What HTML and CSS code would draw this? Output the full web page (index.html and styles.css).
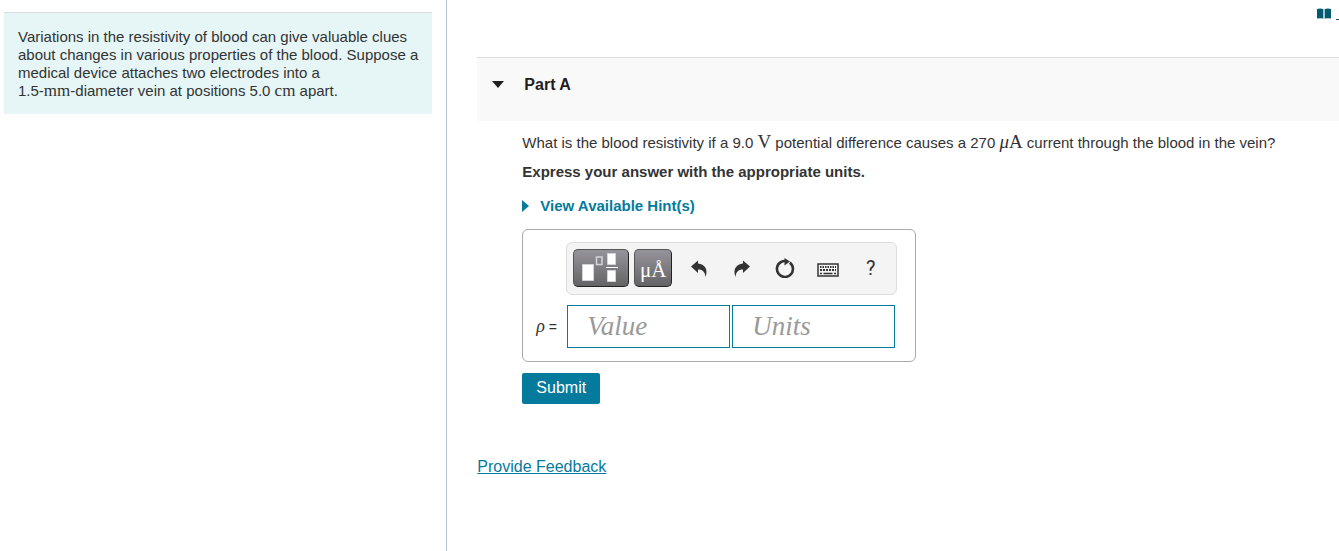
FILE: index.html
```html
<!DOCTYPE html>
<html lang="en">
<head>
<meta charset="utf-8">
<meta name="viewport" content="width=device-width, initial-scale=1">
<title>Part A</title>
<link rel="stylesheet" href="styles.css">
</head>
<body>
<div class="layout">
  <aside class="intro-pane">
    <p class="intro-card">Variations in the resistivity of blood can give valuable clues about changes in various properties of the blood. Suppose a medical device attaches two electrodes into a <span class="nowrap">1.5-<span class="unit">mm</span>-diameter</span> vein at positions 5.0 <span class="unit">cm</span> apart.</p>
  </aside>
  <main class="work-pane">
    <div class="topbar">
      <a class="resource-link" href="#" aria-label="Review">
        <svg class="book-icon" viewBox="0 0 14 12" aria-hidden="true"><path d="M0 1Q3 0 6.300 1V10.500Q3 10 0 10.500ZM7.700 1Q11 0 14 1V10.500Q11 10 7.700 10.500Z" fill="#005a70"/><path d="M6.300 1H7.700V10.500H6.300Z" fill="#9fc3cc"/></svg>
      </a>
    </div>
    <header class="part-header">
      <button class="toggle" type="button" aria-label="Collapse Part A"><svg class="caret" viewBox="0 0 12 7" aria-hidden="true"><path d="M0 0H12L6 7Z" fill="#231f20"/></svg></button>
      <h2 class="part-title">Part A</h2>
    </header>
    <section class="part-body">
      <p class="question">What is the blood resistivity if a 9.0 <span class="math">V</span> potential difference causes a 270 <span class="math"><i>μ</i>A</span> current through the blood in the vein?</p>
      <p class="instruction">Express your answer with the appropriate units.</p>
      <button class="hints" type="button"><svg class="hint-arrow" viewBox="0 0 7 12" aria-hidden="true"><path d="M0 0L7 6L0 12Z" fill="#047a9c"/></svg>View Available Hint(s)</button>
      <form class="answer-form">
        <div class="answer-box">
          <div class="toolbar" role="toolbar" aria-label="Equation tools">
            <button class="palette palette-wide" type="button" aria-label="Templates">
              <svg class="template-icon" viewBox="0 0 36 30" aria-hidden="true"><g fill="#fff" stroke="#d4d4d8"><path d="M.5 12.500H11.500V28.500H.5Z"/><path d="M25.500 1.500H33.500V12.500H25.500ZM25.500 18.500H33.500V29.500H25.500Z"/></g><path d="M14.500 5H20V12.500H14.500Z" fill="none" stroke="#d4d4d8" stroke-width="1.500"/><path d="M24 15.500H36" stroke="#fff"/></svg>
            </button>
            <button class="palette palette-units" type="button" aria-label="Units">μÅ</button>
            <div class="tools">
              <button class="tool" type="button" aria-label="Undo"><svg class="tool-icon" viewBox="0 0 20 20"><path d="M2 8.500L9 2.500V5.500C15.500 6 19.500 11 16.500 19C16 14 14 11.500 9 11.500V15Z" fill="#333"/></svg></button>
              <button class="tool" type="button" aria-label="Redo"><svg class="tool-icon" viewBox="0 0 20 20"><path d="M18 8.500L11 2.500V5.500C4.500 6 .5 11 3.500 19C4 14 6 11.500 11 11.500V15Z" fill="#333"/></svg></button>
              <button class="tool" type="button" aria-label="Reset"><svg class="tool-icon" viewBox="0 0 20 20"><path d="M14.800 4.600A8 8 0 1 1 6 4Q8 2.800 10.500 3" fill="none" stroke="#333" stroke-width="2.600"/><path d="M9.500 0L15 3.500L9.500 7.500Z" fill="#333"/></svg></button>
              <button class="tool" type="button" aria-label="Keyboard"><svg class="keyboard-icon" viewBox="0 0 22 14"><path d="M1 1H21V13H1Z" fill="none" stroke="#333" stroke-width="1.500"/><path d="M3 4H19" stroke="#333" stroke-width="2" stroke-dasharray="1.500 1"/><path d="M3 7H19" stroke="#333" stroke-width="2" stroke-dasharray="2 1"/><path d="M3 10.500H5M6.500 10.500H15.500M17 10.500H19" stroke="#333" stroke-width="1.500"/></svg></button>
              <button class="tool" type="button" aria-label="Help">?</button>
            </div>
          </div>
          <div class="answer-row">
            <span class="symbol"><i class="rho">ρ</i> =</span>
            <input class="field" type="text" aria-label="Value" placeholder="Value">
            <input class="field" type="text" aria-label="Units" placeholder="Units">
          </div>
        </div>
        <button class="submit" type="button">Submit</button>
      </form>
    </section>
    <a class="feedback" href="#">Provide Feedback</a>
  </main>
</div>
</body>
</html>
```
FILE: styles.css
```css
* { box-sizing: border-box; }
body {
  margin: 0;
  background: #fff;
  color: #333;
  font: 15px/18px "Liberation Sans", Arial, sans-serif;
}
p, h2 { margin: 0; }
button {
  margin: 0;
  padding: 0;
  border: 0;
  background: none;
  color: inherit;
  font: inherit;
  cursor: pointer;
}
svg { display: block; }

.layout {
  display: grid;
  grid-template-columns: minmax(0, 1fr) minmax(0, 2fr);
  min-height: 100vh;
}
.intro-pane { padding: 12px 14px 12px 4px; }
.intro-card {
  padding: 15px 12px 14px 14px;
  border-top: 1px solid #d9dfdf;
  background: #e6f6f7;
}
.nowrap { white-space: nowrap; }
.unit, .math { font-family: "Liberation Serif", "Times New Roman", serif; }
.unit { font-size: 17px; line-height: 1; }
.math { font-size: 19px; line-height: 1; }

.work-pane {
  padding-left: 30px;
  border-left: 1px solid #b5c7d6;
}
.topbar {
  display: flex;
  justify-content: flex-end;
  height: 57px;
  padding: 8px 0 0;
}
.resource-link {
  display: flex;
  align-self: flex-start;
  gap: 5px;
}
.resource-link::after {
  content: "";
  align-self: flex-end;
  width: 3px;
  height: 1px;
  background: #005a70;
}
.book-icon { width: 14px; height: 12px; }
.part-header {
  display: flex;
  align-items: flex-start;
  gap: 20px;
  height: 64px;
  padding: 17px 15px;
  border-top: 1px solid #ddd;
  background: #f9f9f9;
}
.toggle { padding: 6px 0; }
.caret { width: 12px; height: 7px; }
.part-title { color: #231f20; font-size: 16px; line-height: 20px; }

.part-body {
  display: flex;
  flex-direction: column;
  align-items: flex-start;
  padding: 11px 0 0 45px;
}
.question { line-height: 20px; }
.instruction { margin-top: 10px; font-weight: bold; }
.hints {
  display: flex;
  align-items: center;
  gap: 11px;
  margin-top: 16px;
  color: #047a9c;
  font-weight: bold;
}
.hint-arrow { width: 7px; height: 12px; }
.answer-form { margin-top: 14px; }
.answer-box {
  padding: 12px 18px 13px 13px;
  border: 1px solid #a9a9a9;
  border-radius: 6px;
}
.toolbar {
  display: flex;
  align-items: flex-start;
  gap: 5px;
  height: 53px;
  margin-left: 30px;
  padding: 6px 4px 0 6px;
  border: 1px solid #ddd;
  border-radius: 6px;
  background: #f4f4f4;
}
.palette {
  display: flex;
  align-items: center;
  justify-content: center;
  height: 38px;
  border: 1px solid #555;
  border-right-color: #222;
  border-bottom-color: #222;
  border-radius: 5px;
  background: linear-gradient(#96949b, #646466);
  color: #fff;
}
.palette-wide {
  justify-content: flex-start;
  width: 56px;
  padding: 0 0 2px 8px;
}
.palette-units {
  width: 38px;
  padding-top: 4px;
  font: 21px/24px "Liberation Serif", "Times New Roman", serif;
}
.template-icon { width: 36px; height: 30px; }
.tools { display: flex; flex: 1; }
.tool {
  display: flex;
  flex: 1;
  align-items: center;
  justify-content: center;
  height: 38px;
  font: 20px/24px Roboto, sans-serif;
}
.tool-icon { width: 20px; height: 20px; }
.keyboard-icon { width: 22px; height: 14px; margin-top: 4px; }
.answer-row {
  display: flex;
  align-items: center;
  gap: 2px;
  margin-top: 10px;
  padding-right: 2px;
}
.symbol { width: 29px; font-size: 14px; }
.rho { font: italic 18px/18px "Liberation Serif", "Times New Roman", serif; }
.field {
  width: 163px;
  height: 43px;
  padding: 0 19px;
  border: 1px solid #047a9c;
  background: #fff;
  font: italic 27px/32px "Liberation Serif", "Times New Roman", serif;
}
.field::placeholder { color: #999; opacity: 1; }
.submit {
  height: 31px;
  margin-top: 11px;
  padding: 0 14px 2px;
  border-radius: 2px;
  background: #047a9c;
  color: #fff;
  font-size: 16px;
}
.feedback {
  display: inline-block;
  margin-top: 54px;
  color: #047a9c;
  font-size: 16px;
}
```
